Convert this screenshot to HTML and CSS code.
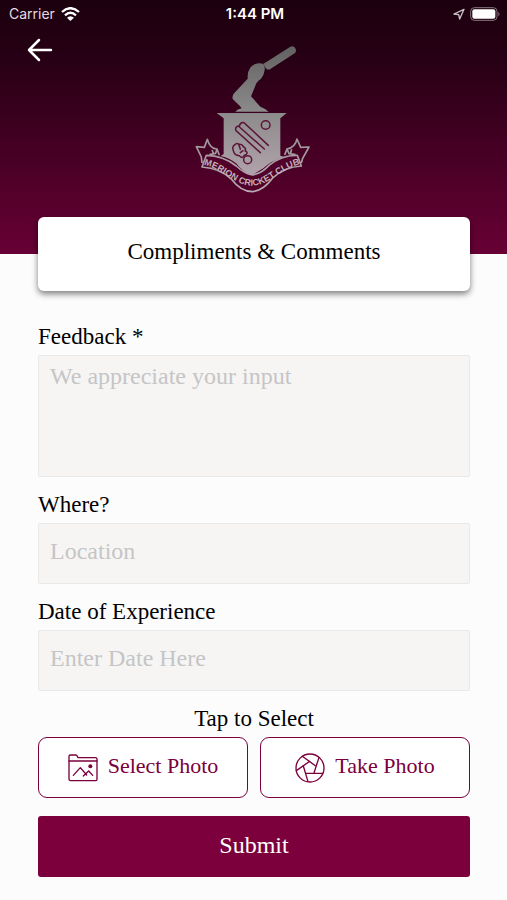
FILE: index.html
```html
<!DOCTYPE html>
<html lang="en">
<head>
    <meta charset="UTF-8">
    <meta name="viewport" content="width=device-width, initial-scale=1.0">
    <title>Compliments &amp; Comments</title>
    <link rel="stylesheet" href="styles.css">
</head>
<body>

    <header class="header">
        <div class="status">
            <div class="status-left">
                <span>Carrier</span>
                <svg width="19" height="14" viewBox="0 0 57 42">
                    <g fill="none" stroke="#fff" stroke-width="7">
                        <path d="M3 15 Q28 -8 54 15"/>
                        <path d="M12 25 Q28 10 45 25"/>
                    </g>
                    <path d="M18 32 Q28 23 39 32 L28 42 Z" fill="#fff"/>
                </svg>
            </div>
            <div class="status-time">1:44 PM</div>
            <div class="status-right">
                <svg width="12" height="12" viewBox="0 0 36 36">
                    <path d="M3 18 L33 4 L20 33 L17 20 Z" fill="none" stroke="#ccc2c8" stroke-width="4" stroke-linejoin="round"/>
                </svg>
                <svg width="31" height="14" viewBox="0 0 93 42">
                    <rect x="2" y="2" width="79" height="38" rx="11" fill="none" stroke="#85757e" stroke-width="3"/>
                    <rect x="7" y="7" width="69" height="28" rx="6" fill="#fff"/>
                    <path d="M85 14 Q92 21 85 28 Z" fill="#85757e"/>
                </svg>
            </div>
        </div>

        <div class="nav">
            <button class="back" type="button" aria-label="Back">
                <svg width="26" height="24" viewBox="0 0 26 24">
                    <path d="M24 12 H2 M12 2 L2 12 L12 22" fill="none" stroke="#fff" stroke-width="2.5" stroke-linecap="round" stroke-linejoin="round"/>
                </svg>
            </button>

            <svg class="logo" width="140" height="165" viewBox="0 0 420 495" role="img" aria-label="Merion Cricket Club">
                <defs>
                    <linearGradient id="silver" x1="0" y1="30" x2="0" y2="470" gradientUnits="userSpaceOnUse">
                        <stop offset="0" stop-color="#626061"/>
                        <stop offset="0.45" stop-color="#8b8a8a"/>
                        <stop offset="1" stop-color="#bba9b3"/>
                    </linearGradient>
                    <path id="motto" d="M58 390 C115 399 150 452 205 452 C255 452 290 399 349 388"/>
                </defs>
                <!-- bat and arm -->
                <g fill="url(#silver)">
                    <path d="M238 86 L246 82 L319 35 Q329 31 334 40 Q339 49 332 55 L258 103 Q250 107 245 99 Z"/>
                    <path d="M191 122 Q193 96 212 88 Q226 82 238 87 Q244 94 242 105 Q238 128 225 136 L217 145 L201 184 L229 215 Q243 220 254 230 H154 Q160 222 173 220 L167 212 L146 192 Q144 184 149 176 L191 131 Z"/>
                    <path d="M98 234 H308 L289 250 V362 L300 366 Q262 377 239 399 L205 420 Q174 410 158 386 Q138 370 110 363 L119 357 V250 Z"/>
                </g>
                <!-- stumps, ball and glove -->
                <g fill="none" stroke="#5a1538" stroke-width="4.5" stroke-linecap="round">
                    <circle cx="245" cy="270" r="13"/>
                    <path d="M229 353 L156 287 Q152 276 163 273 L241 342"/>
                    <path d="M166 273 Q169 261 180 263 L253 331"/>
                    <circle cx="191" cy="374" r="12"/>
                    <path d="M148 347 Q143 335 153 329 Q158 322 165 328 Q174 326 178 335 Q187 340 184 348 Q193 352 187 358 L181 361 Q174 373 166 362 Q151 362 148 347 Z"/>
                    <path d="M165 330 L169 343 M169 353 L177 347"/>
                </g>
                <!-- ribbon -->
                <g fill="none" stroke="url(#silver)" stroke-width="5" stroke-linejoin="round">
                    <path fill="#500029" d="M67 361 Q119 362 157 393 Q181 416 205 420 Q232 416 255 391 Q292 360 340 361 L352 393 Q302 396 266 429 Q239 466 205 470 Q169 468 144 434 Q108 399 54 396 Z"/>
                    <path d="M54 384 L52 366 L37 335 L61 337 L70 313 Q78 342 99 342 L95 355 L76 359"/>
                    <path d="M352 384 L356 370 L375 336 L350 337 L339 312 Q334 337 309 342 L315 356 L335 359"/>
                    <path d="M84 345 L89 357 M99 342 L106 361 M323 343 L319 356 M309 342 L302 360"/>
                </g>
                <text class="motto"><textPath href="#motto" startOffset="50%" text-anchor="middle">MERION CRICKET CLUB</textPath></text>
            </svg>
        </div>
    </header>

    <main class="content">
        <h1 class="card">Compliments &amp; Comments</h1>

        <form class="form">
            <label class="label" for="feedback">Feedback *</label>
            <textarea class="field field-large" id="feedback" placeholder="We appreciate your input" required></textarea>

            <label class="label" for="location">Where?</label>
            <input class="field" id="location" type="text" placeholder="Location">

            <label class="label" for="date">Date of Experience</label>
            <input class="field" id="date" type="text" placeholder="Enter Date Here">

            <p class="label label-center">Tap to Select</p>
            <div class="photos">
                <button class="btn btn-outline" type="button">
                    <svg class="icon" width="30" height="30" viewBox="0 0 90 90">
                        <g fill="none" stroke="#7b003c" stroke-width="4" stroke-linejoin="round" stroke-linecap="round">
                            <path d="M3 20 V10 Q3 6 7 6 H23 Q27 6 28 10 L30 14 H82 Q87 14 87 18 V79 Q87 83 83 83 H8 Q3 83 3 79 V20 Z"/>
                            <path d="M3 24 H87"/>
                            <path d="M16 67 L37 44 L56 66 M46 69 L62 54 L74 67"/>
                        </g>
                        <circle cx="67" cy="40" r="6" fill="#7b003c"/>
                    </svg>
                    <span>Select Photo</span>
                </button>
                <button class="btn btn-outline" type="button">
                    <svg class="icon" width="30" height="30" viewBox="0 0 90 90">
                        <g fill="none" stroke="#7b003c" stroke-width="4" stroke-linejoin="round" stroke-linecap="round">
                            <circle cx="45" cy="45" r="42"/>
                            <path d="M22 10 L61 38"/>
                            <path d="M72 13 L57 60"/>
                            <path d="M83 61 H32"/>
                            <path d="M39 86 L25 39"/>
                            <path d="M4 53 L44 25"/>
                        </g>
                    </svg>
                    <span>Take Photo</span>
                </button>
            </div>

            <button class="btn btn-submit" type="submit">Submit</button>
        </form>
    </main>

</body>
</html>
```

FILE: styles.css
```css
* {
    box-sizing: border-box;
}
body {
    margin: 0;
    background-color: #fcfcfc;
    color: #000;
    font-family: Baskerville, "Liberation Serif", serif;
    font-size: 23px;
    line-height: 26px;
}
.header {
    height: 254px;
    background: linear-gradient(#1c000e, #260014 22%, #680035);
    color: #fff;
}
.status {
    display: grid;
    grid-template-columns: 1fr auto 1fr;
    align-items: center;
    height: 28px;
    padding: 0 6px 0 9px;
    font-family: Inter, sans-serif;
    font-size: 14px;
    line-height: 20px;
}
.status-left {
    display: flex;
    align-items: center;
    gap: 6px;
    color: #e2dce0;
}
.status-time {
    font-size: 15px;
    font-weight: 600;
}
.status-right {
    display: flex;
    align-items: center;
    justify-content: flex-end;
    gap: 5px;
}
.nav {
    display: grid;
    grid-template-columns: 1fr auto 1fr;
    align-items: start;
    padding-top: 7px;
}
.back {
    justify-self: start;
    margin: 3px 0 0 27px;
    padding: 0;
    border: none;
    background: none;
    cursor: pointer;
}
.back svg,
.logo,
.icon {
    display: block;
}
.motto {
    fill: #c2b0ba;
    font-family: "Liberation Sans Narrow", "Liberation Sans", sans-serif;
    font-size: 27px;
    font-weight: bold;
}
.content {
    padding: 0 37px 24px 38px;
}
.card {
    position: relative;
    margin: -37px 0 33px;
    padding: 22px 16px 26px;
    border-radius: 6px;
    background-color: #fff;
    box-shadow: 0 3px 6px rgba(0, 0, 0, 0.5);
    font-size: 23px;
    font-weight: normal;
    text-align: center;
}
.form {
    display: flex;
    flex-direction: column;
}
.label {
    margin: 0 0 5px;
}
.label-center {
    text-align: center;
}
.field {
    height: 61px;
    margin: 0 0 15px;
    padding: 0 11px 4px;
    border: 1px solid #e9e9e9;
    border-radius: 2px;
    background-color: #f6f5f3;
    color: #000;
    font: inherit;
    font-size: 24px;
}
.field-large {
    height: 122px;
    padding-top: 7px;
    resize: none;
}
.field::placeholder {
    color: #c5c5c7;
    opacity: 1;
}
.photos {
    display: grid;
    grid-template-columns: 1fr 1fr;
    gap: 12px;
    margin-bottom: 18px;
}
.btn {
    display: flex;
    align-items: center;
    justify-content: center;
    gap: 10px;
    height: 61px;
    padding: 0 0 4px;
    border: none;
    font: inherit;
    cursor: pointer;
}
.btn-outline {
    border: 1px solid #7b003c;
    border-radius: 9px;
    background-color: #fff;
    color: #7b003c;
    font-size: 22px;
}
.btn-outline .icon {
    margin-top: 4px;
}
.btn-submit {
    border-radius: 3px;
    background-color: #7b003c;
    color: #fff;
    font-size: 24px;
}
```
